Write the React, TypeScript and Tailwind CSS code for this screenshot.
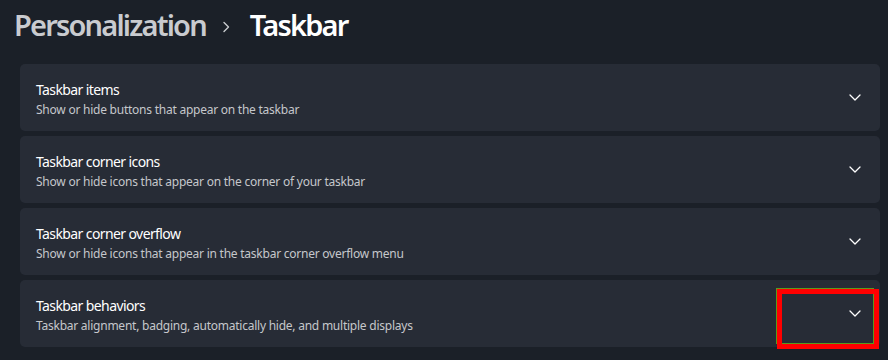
const items = [
  { title: 'Taskbar items', desc: 'Show or hide buttons that appear on the taskbar' },
  { title: 'Taskbar corner icons', desc: 'Show or hide icons that appear on the corner of your taskbar' },
  { title: 'Taskbar corner overflow', desc: 'Show or hide icons that appear in the taskbar corner overflow menu' },
  { title: 'Taskbar behaviors', desc: 'Taskbar alignment, badging, automatically hide, and multiple displays' },
]

function Chevron() {
  return (
    <svg width="12" height="7" viewBox="0 0 12 7" fill="none">
      <path d="M1 1l5 5 5-5" stroke="#ffffff" strokeWidth="1.3" strokeLinecap="round" strokeLinejoin="round" />
    </svg>
  )
}

function Separator() {
  return (
    <svg width="8" height="12" viewBox="0 0 8 12" fill="none" className="ml-[16px] mr-[20px] mt-[3px]">
      <path d="M2 1.5l4.5 4.5-4.5 4.5" stroke="#c9cbcf" strokeWidth="1.4" strokeLinecap="round" strokeLinejoin="round" />
    </svg>
  )
}

export default function App() {
  return (
    <div
      className="relative w-[888px] h-[360px] overflow-hidden bg-[#1b2028] text-white"
      style={{ fontFamily: '"Noto Sans", "Open Sans", sans-serif' }}
    >
      {/* Breadcrumb header */}
      <div className="flex items-center h-[52px] pl-[14px] pb-[2px]">
        <span className="text-[29px] font-semibold text-[#c9cbcf] tracking-[-1.8px]">Personalization</span>
        <Separator />
        <span className="text-[29px] font-semibold text-white tracking-[-1.8px]">Taskbar</span>
      </div>

      {/* Setting cards */}
      <div className="flex flex-col gap-[5px] pl-[20px] pr-[8px] pt-[12px]">
        {items.map((item) => (
          <div
            key={item.title}
            className="flex items-center justify-between h-[67px] rounded-[5px] bg-[#272c36] pl-[16px] pr-[19px]"
          >
            <div className="flex flex-col pt-[2px]">
              <span className="text-[14px] leading-[20px] text-white tracking-[-0.6px]">{item.title}</span>
              <span className="mt-[2px] text-[12px] leading-[16px] text-[#c5c7cb] tracking-[-0.24px]">{item.desc}</span>
            </div>
            <Chevron />
          </div>
        ))}
      </div>

      {/* Highlight overlay */}
      <div className="absolute left-[776px] top-[288px] w-[98px] h-[56px] border border-[#5a9a1c]" />
      <div className="absolute left-[777px] top-[289px] w-[102px] h-[60px] border-[5px] border-[#ff0000]" />
    </div>
  )
}
